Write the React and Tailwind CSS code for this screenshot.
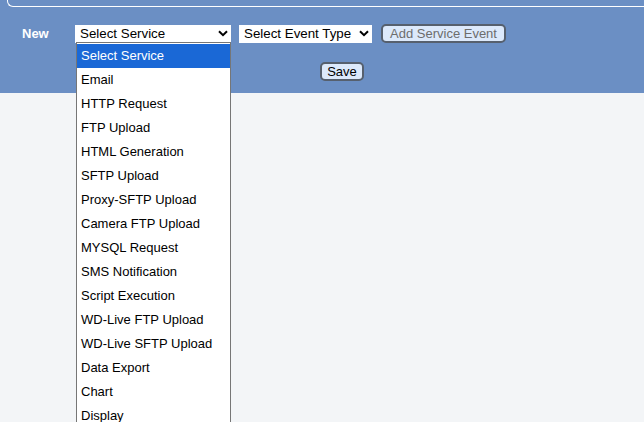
const services = [
	"Select Service",
	"Email",
	"HTTP Request",
	"FTP Upload",
	"HTML Generation",
	"SFTP Upload",
	"Proxy-SFTP Upload",
	"Camera FTP Upload",
	"MYSQL Request",
	"SMS Notification",
	"Script Execution",
	"WD-Live FTP Upload",
	"WD-Live SFTP Upload",
	"Data Export",
	"Chart",
	"Display",
];

const Chevron = () => (
	<svg width="10" height="7" viewBox="0 0 10 7" className="shrink-0">
		<path d="M1 1.2 L5 5.2 L9 1.2" fill="none" stroke="#000" strokeWidth="2" />
	</svg>
);

const FakeSelect = ({ label, widthClass, children }) => (
	<div className={`relative ${widthClass}`}>
		<div className="flex h-[18px] items-center justify-between bg-white pl-[5px] pr-[3px] text-[13.33px] leading-none text-black">
			<span>{label}</span>
			<Chevron />
		</div>
		{children}
	</div>
);

export default function App() {
	return (
		<div
			className="min-h-[422px] bg-[#f3f5f7]"
			style={{ fontFamily: '"Liberation Sans", Arial, sans-serif' }}>
			<div className="h-[93px] overflow-hidden bg-[#6b8fc4]">
				<div className="ml-[7px] h-[7px] rounded-bl-[6px] border-b border-l border-white" />
				<div className="mt-[17px] flex items-center">
					<span className="w-[75px] pl-[22px] text-[13px] font-bold text-white">New</span>
					<FakeSelect label="Select Service" widthClass="w-[156px]" />
					<div className="ml-[8px]">
						<FakeSelect label="Select Event Type" widthClass="w-[133px]" />
					</div>
					<button
						type="button"
						disabled
						className="ml-[9px] h-[19px] w-[125px] rounded-[5px] border-2 border-[#56606e] bg-[#dce9fb] text-[13px] leading-none text-[#6d6d6d]">
						Add Service Event
					</button>
				</div>
				<div className="mt-[15px] pl-[320px]">
					<button
						type="button"
						className="h-[19px] w-[44px] rounded-[5px] border-2 border-[#56606e] bg-[#dce9fb] text-[13px] leading-none text-black">
						Save
					</button>
				</div>
			</div>
			<div className="absolute left-[76px] top-[42px] w-[155px] border border-[#767676] bg-white pt-px text-[13px] text-black">
				{services.map((name, i) => (
					<div
						key={name}
						className={`flex h-[24px] items-center pl-[4px] ${i === 0 ? "bg-[#1a68d6] text-white" : ""}`}>
						{name}
					</div>
				))}
			</div>
		</div>
	);
}
